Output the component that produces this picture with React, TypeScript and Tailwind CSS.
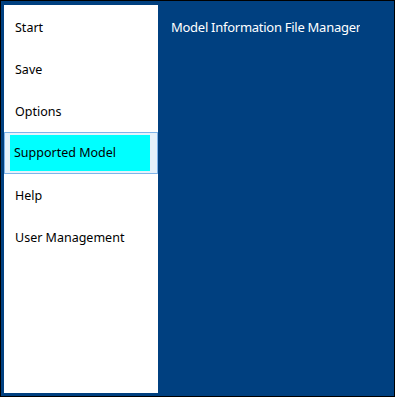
import React from 'react'

const items = ['Start', 'Save', 'Options', 'Supported Model', 'Help', 'User Management']

function MenuItem({ label, selected }: { label: string; selected?: boolean }) {
  if (selected) {
    return (
      <div className="h-[42px] border border-[#7eb4ea] bg-[#e5f1fb] pt-[2px] pb-[2px] pl-[5px] pr-[7px]">
        <div className="flex h-full items-center bg-[#00ffff] pl-[4px] pt-[1px] text-black">{label}</div>
      </div>
    )
  }
  return <div className="flex h-[42px] items-center pl-[11px] pt-[2px] text-black">{label}</div>
}

export default function App() {
  return (
    <div
      className="flex h-[397px] w-[395px] border border-black bg-[#004080] pl-[3px] pt-[4px] pb-[3px] text-[12.5px]"
      style={{ fontFamily: '"Noto Sans", "Open Sans", sans-serif' }}
    >
      <div className="flex w-[154px] flex-col bg-white pt-[1px]">
        {items.map((label) => (
          <MenuItem key={label} label={label} selected={label === 'Supported Model'} />
        ))}
      </div>
      <div className="pl-[13px] pt-[13px]">
        <div className="w-[189px] overflow-hidden whitespace-nowrap text-[13px] tracking-[-0.27px] text-white">
          Model Information File Management
        </div>
      </div>
    </div>
  )
}
